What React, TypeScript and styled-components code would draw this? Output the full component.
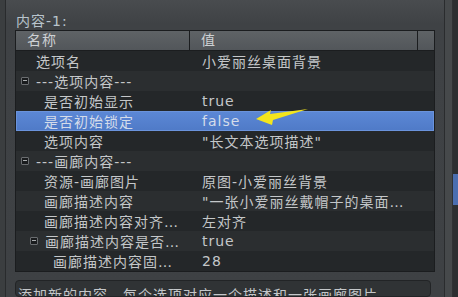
import React from 'react';
import styled, { createGlobalStyle } from 'styled-components';

const GlobalStyle = createGlobalStyle`
  html, body {
    margin: 0;
    padding: 0;
    background: #3e4144;
  }
  body {
    font-family: "DejaVu Sans", "Noto Sans CJK SC", sans-serif;
    font-size: 14px;
  }
`;

const Window = styled.div`
  display: flex;
  width: 458px;
  height: 297px;
  overflow: hidden;
  background: #3e4144;
`;

const LeftEdge = styled.div`
  width: 5px;
  flex-shrink: 0;
  background: #3b3e40;
  border-right: 1px solid #292b2d;
`;

const Panel = styled.div`
  flex: 1;
  display: flex;
  flex-direction: column;
  padding: 12px 9px 0 9px;
  background: linear-gradient(180deg, #494c4f 0px, #3f4245 24px, #3e4144 100%);
  border-right: 1px solid #2a2c2e;
  min-width: 0;
`;

const SideStrip = styled.div`
  width: 7px;
  flex-shrink: 0;
  background: #46494b;
  border-right: 1px solid #303234;
`;

const SideDark = styled.div`
  width: 5px;
  flex-shrink: 0;
  display: flex;
  flex-direction: column;
  background: #2d2f31;
`;

const SideSelection = styled.div`
  margin-top: 174px;
  height: 31px;
  background: #4b6eb0;
`;

const SectionLabel = styled.div`
  height: 18px;
  padding-left: 1px;
  line-height: 18px;
  color: #b9c4cc;
  letter-spacing: 1px;
`;

const Table = styled.div`
  position: relative;
  width: 418px;
  border: 1px solid #1b1d1f;
  background: #25282a;
`;

const HeaderRow = styled.div`
  display: flex;
  height: 19px;
  border-bottom: 1px solid #1b1d1f;
  background: linear-gradient(180deg, #5f6366 0%, #52565a 100%);
`;

const HeaderCell = styled.div<{ $width?: number }>`
  ${(p) => (p.$width ? `width: ${p.$width}px;` : 'flex: 1;')}
  padding-left: 11px;
  line-height: 19px;
  color: #cdd1d4;
  letter-spacing: 1px;
  border-right: 1px solid #1b1d1f;
  box-sizing: border-box;
  &:last-child {
    border-right: none;
  }
`;

const Row = styled.div<{ $even?: boolean; $selected?: boolean }>`
  display: flex;
  height: 20px;
  align-items: center;
  color: ${(p) => (p.$selected ? '#d4dcea' : '#c4c7c9')};
  letter-spacing: 1px;
  white-space: nowrap;
  background: ${(p) =>
    p.$selected
      ? 'linear-gradient(180deg, #5c88d6 0%, #4f7ac7 100%)'
      : p.$even
      ? '#2b2e30'
      : '#242729'};
  box-shadow: ${(p) => (p.$selected ? 'inset 0 0 0 1px #6a93dc' : 'none')};
`;

const NameCell = styled.div<{ $indent: number }>`
  display: flex;
  align-items: center;
  width: 174px;
  padding-left: ${(p) => p.$indent}px;
  box-sizing: border-box;
  overflow: hidden;
`;

const ValueCell = styled.div`
  flex: 1;
  padding-left: 12px;
  overflow: hidden;
`;

const Expander = styled.span`
  position: relative;
  width: 8px;
  height: 8px;
  margin-right: 7px;
  box-sizing: border-box;
  border: 1px solid #6a6d70;
  border-radius: 1px;
  background: #1a1c1e;
  flex-shrink: 0;

  &::after {
    content: '';
    position: absolute;
    left: 1px;
    right: 1px;
    top: 2px;
    height: 1px;
    background: #a9acae;
  }
`;

const Arrow = styled.svg`
  position: absolute;
  left: 235px;
  top: 74px;
  pointer-events: none;
`;

const HintBox = styled.div`
  margin-top: 8px;
  width: 416px;
  height: 40px;
  box-sizing: border-box;
  border: 1px solid #222426;
  border-radius: 4px;
  background: #303335;
  padding: 3px 0 0 2px;
  color: #c4c7c9;
  letter-spacing: 1px;
  white-space: nowrap;
  overflow: hidden;
`;

type Item = {
  name: string;
  value?: string;
  indent: number;
  group?: boolean;
  selected?: boolean;
};

const items: Item[] = [
  { name: '选项名', value: '小爱丽丝桌面背景', indent: 20 },
  { name: '---选项内容---', indent: 5, group: true },
  { name: '是否初始显示', value: 'true', indent: 28 },
  { name: '是否初始锁定', value: 'false', indent: 28, selected: true },
  { name: '选项内容', value: '"长文本选项描述"', indent: 28 },
  { name: '---画廊内容---', indent: 5, group: true },
  { name: '资源-画廊图片', value: '原图-小爱丽丝背景', indent: 28 },
  { name: '画廊描述内容', value: '"一张小爱丽丝戴帽子的桌面…', indent: 28 },
  { name: '画廊描述内容对齐…', value: '左对齐', indent: 28 },
  { name: '画廊描述内容是否…', value: 'true', indent: 14, group: true },
  { name: '画廊描述内容固…', value: '28', indent: 37 },
];

const App = () => {
  return (
    <>
      <GlobalStyle />
      <Window>
        <LeftEdge />
        <Panel>
          <SectionLabel>内容-1:</SectionLabel>
          <Table>
            <HeaderRow>
              <HeaderCell $width={174}>名称</HeaderCell>
              <HeaderCell $width={228}>值</HeaderCell>
              <HeaderCell />
            </HeaderRow>
            {items.map((item, i) => (
              <Row key={i} $even={i % 2 === 1} $selected={item.selected}>
                <NameCell $indent={item.indent}>
                  {item.group && <Expander />}
                  {item.name}
                </NameCell>
                <ValueCell>{item.value}</ValueCell>
              </Row>
            ))}
            <Arrow width="60" height="22" viewBox="0 0 60 22">
              <polygon
                points="5,14 20,5 19,9 57,4 22,15 21,20"
                fill="#f4e61c"
              />
            </Arrow>
          </Table>
          <HintBox>添加新的内容，每个选项对应一个描述和一张画廊图片。</HintBox>
        </Panel>
        <SideStrip />
        <SideDark>
          <SideSelection />
        </SideDark>
      </Window>
    </>
  );
};

export default App;
